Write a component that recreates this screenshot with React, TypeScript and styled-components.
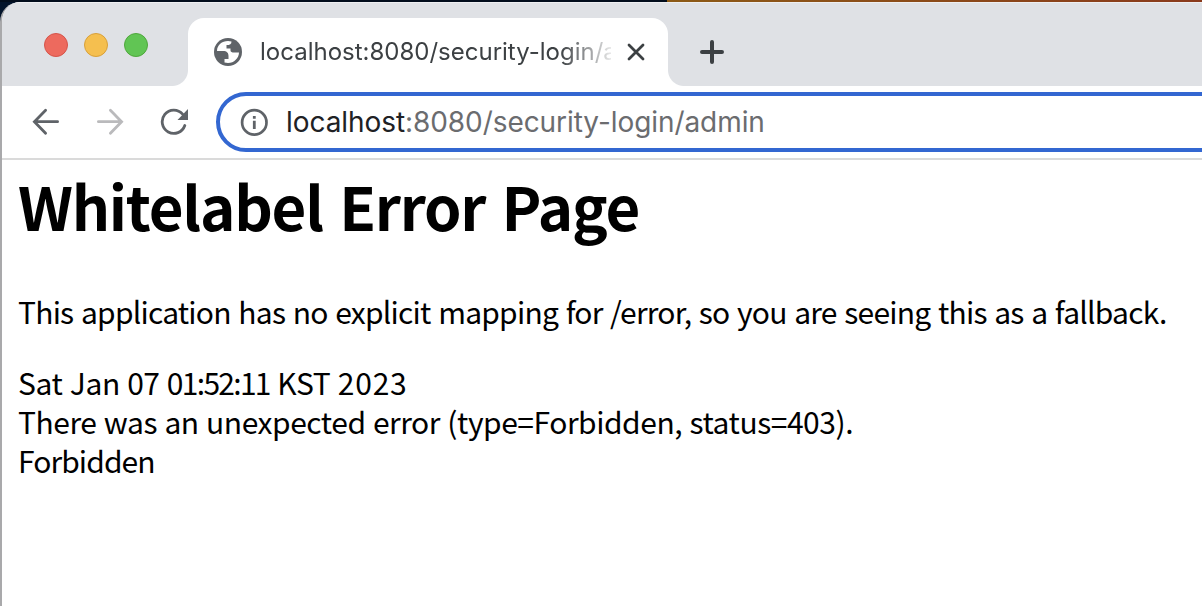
import React from 'react';
import styled, { createGlobalStyle } from 'styled-components';

const GlobalStyle = createGlobalStyle`
    * {
        box-sizing: border-box;
    }
    body {
        margin: 0;
        background-color: #03142b;
        overflow: hidden;
    }
`

const Desktop = styled.div`
    height: 606px;
    padding-top: 2px;
    background: linear-gradient(90deg, #020d1c 0 667px, #8c5a16 667px, #8a3a1c) top / 100% 2px no-repeat, #03142b;
    overflow: hidden;
`

const Window = styled.div`
    height: 604px;
    display: flex;
    flex-direction: column;
    background-color: white;
    border-left: 2px solid #a9a9ab;
    border-top-left-radius: 20px;
    overflow: hidden;
`

const TabStrip = styled.div`
    flex: none;
    height: 84px;
    display: flex;
    background-color: #dfe1e5;
    border-top: 1px solid #eeeff1;
`

const TrafficLights = styled.div`
    width: 186px;
    display: flex;
    gap: 16px;
    padding: 30px 0 0 42px;
`

const Light = styled.span<{ $fill: string; $edge: string }>`
    width: 24px;
    height: 24px;
    border-radius: 50%;
    background-color: ${({ $fill }) => $fill};
    border: 1px solid ${({ $edge }) => $edge};
`

const Tab = styled.div`
    position: relative;
    width: 480px;
    margin-top: 15px;
    padding: 0 20px 0 26px;
    display: flex;
    align-items: center;
    background-color: white;
    border-radius: 16px 16px 0 0;

    &::before,
    &::after {
        content: '';
        position: absolute;
        bottom: 0;
        width: 16px;
        height: 16px;
    }
    &::before {
        right: 100%;
        background: radial-gradient(circle at 0 0, transparent 15.5px, white 16.5px);
    }
    &::after {
        left: 100%;
        background: radial-gradient(circle at 100% 0, transparent 15.5px, white 16.5px);
    }

    svg {
        flex: none;
    }
`

const TabTitle = styled.span`
    width: 351px;
    margin: 0 16px 0 18px;
    font: 24px/32px Inter, sans-serif;
    color: #3c4043;
    white-space: nowrap;
    overflow: hidden;
    mask-image: linear-gradient(90deg, black 300px, transparent 358px);
`

const NewTab = styled.div`
    padding: 37px 0 0 32px;
`

const Toolbar = styled.div`
    flex: none;
    height: 74px;
    display: flex;
    align-items: center;
    padding-left: 30px;
    border-bottom: 2px solid #dadada;
    overflow: hidden;
`

const NavButtons = styled.div`
    flex: none;
    width: 184px;
    display: flex;
    gap: 36px;
`

const AddressBar = styled.div`
    flex: none;
    width: 1040px;
    height: 60px;
    display: flex;
    align-items: center;
    gap: 18px;
    padding-left: 20px;
    border: 4px solid #3367d1;
    border-radius: 30px;
`

const Url = styled.span`
    font: 28px/36px Inter, sans-serif;
    letter-spacing: -0.07px;
    color: #6b6c6f;
    white-space: nowrap;
`

const Host = styled.span`
    color: #202124;
`

const Page = styled.main`
    padding-left: 16px;
    font: 30px/39px "Noto Sans CJK KR", sans-serif;
    color: black;
    white-space: nowrap;
`

const Title = styled.h1`
    margin: 0 0 43px;
    font-size: 60px;
    line-height: 89px;
    font-weight: 700;
    letter-spacing: -1.25px;
    word-spacing: 4px;
`

const Message = styled.p`
    margin: 0 0 32px;
    letter-spacing: -0.77px;
    word-spacing: 1.6px;
`

const Line = styled.div<{ $tracking: string }>`
    letter-spacing: ${({ $tracking }) => $tracking};
    word-spacing: 1.1px;
`

const Digits = styled.span<{ $tracking: string }>`
    letter-spacing: ${({ $tracking }) => $tracking};
`

const GlobeIcon = () => (
    <svg width="28" height="28" viewBox="0 0 28 28">
        <circle cx="14" cy="14" r="14" fill="#5f6368" />
        <path
            d="M3 13C3 7 8 3 14 3L17.5 3.4C17.5 6 16 7 12.5 7V10.5H16.5V12.5C16.5 14 18 14.5 20 14.5H25C25 20 20 25 14 25L10.5 24.4V21H14.5V18C14.5 15 13 13 9 13Z"
            fill="white"
        />
    </svg>
)

const App = () => {
    return (
        <Desktop>
            <GlobalStyle />
            <Window>
                <TabStrip>
                    <TrafficLights>
                        <Light $fill="#ed6a5e" $edge="#d5544a" />
                        <Light $fill="#f5bf4f" $edge="#d8a03a" />
                        <Light $fill="#61c554" $edge="#4fa73c" />
                    </TrafficLights>
                    <Tab>
                        <GlobeIcon />
                        <TabTitle>localhost:8080/security-login/admin</TabTitle>
                        <svg width="18" height="18" viewBox="0 0 18 18" stroke="#3c4043" strokeWidth="2.8" strokeLinecap="round">
                            <path d="M2 2L16 16M16 2L2 16" />
                        </svg>
                    </Tab>
                    <NewTab>
                        <svg width="24" height="24" viewBox="0 0 24 24" stroke="#3c4043" strokeWidth="4" strokeLinecap="round">
                            <path d="M12 2V22M2 12H22" />
                        </svg>
                    </NewTab>
                </TabStrip>
                <Toolbar>
                    <NavButtons>
                        <svg width="28" height="28" viewBox="0 0 28 28" fill="none" stroke="#5f6368" strokeWidth="2.8" strokeLinecap="round">
                            <path d="M25.6 13.7H3M13.6 2.2L2.4 13.7L13.6 25.2" />
                        </svg>
                        <svg width="28" height="28" viewBox="0 0 28 28" fill="none" stroke="#bababc" strokeWidth="2.8" strokeLinecap="round">
                            <path d="M2.4 13.7H25M14.4 2.2L25.6 13.7L14.4 25.2" />
                        </svg>
                        <svg width="28" height="28" viewBox="0 0 28 28">
                            <path d="M24.8 17.5A11.6 11.6 0 1 1 22.6 6.2" fill="none" stroke="#5f6368" strokeWidth="2.8" strokeLinecap="round" />
                            <path d="M28 1V12H17.5Z" fill="#5f6368" />
                        </svg>
                    </NavButtons>
                    <AddressBar>
                        <svg width="28" height="28" viewBox="0 0 28 28">
                            <circle cx="14.3" cy="14.4" r="12.2" fill="none" stroke="#5f6368" strokeWidth="2.7" />
                            <path d="M12.9 8H15.7V10.8H12.9ZM12.9 12.8H15.7V20.9H12.9Z" fill="#5f6368" />
                        </svg>
                        <Url><Host>localhost</Host>:8080/security-login/admin</Url>
                    </AddressBar>
                </Toolbar>
                <Page>
                    <Title>Whitelabel Error Page</Title>
                    <Message>This application has no explicit mapping for /error, so you are seeing this as a fallback.</Message>
                    <Line $tracking="-0.4px">Sat Jan <Digits $tracking="-0.6px">07</Digits> <Digits $tracking="-1.7px">01:52:11</Digits> KST <Digits $tracking="0.8px">2023</Digits></Line>
                    <Line $tracking="-0.46px">There was an unexpected error (type=Forbidden, status=403).</Line>
                    <Line $tracking="-0.9px">Forbidden</Line>
                </Page>
            </Window>
        </Desktop>
    )
}

export default App
